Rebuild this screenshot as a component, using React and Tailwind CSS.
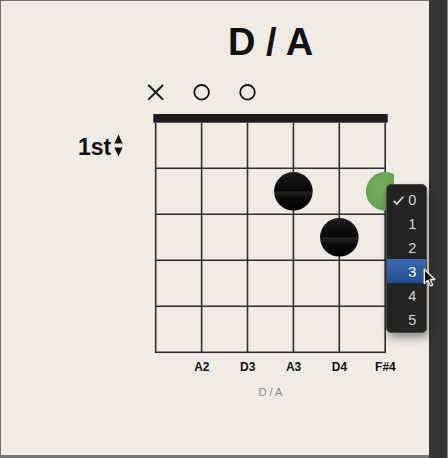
import React from 'react'

const STRING_X = [11.7, 57.6, 103.5, 149.4, 195.3, 241.2]
const FRET_Y = [88.3, 134.3, 180.3, 226.3, 272.3]
const NOTES = ['', 'A2', 'D3', 'A3', 'D4', 'F#4']
const MENU = ['0', '1', '2', '3', '4', '5']

function Fretboard() {
  return (
    <svg width="250" height="275" viewBox="0 0 250 275" className="shrink-0">
      <defs>
        <linearGradient id="ball" x1="0" y1="0" x2="0" y2="1">
          <stop offset="0%" stopColor="#1e1e1e" />
          <stop offset="48%" stopColor="#060606" />
          <stop offset="52%" stopColor="#232323" />
          <stop offset="70%" stopColor="#080808" />
          <stop offset="100%" stopColor="#000" />
        </linearGradient>
        <radialGradient id="green" cx="0.45" cy="0.45" r="0.6">
          <stop offset="0%" stopColor="#76ae5e" />
          <stop offset="100%" stopColor="#65a04c" />
        </radialGradient>
      </defs>

      {/* open / muted markers */}
      <g stroke="#111" strokeWidth="2" fill="none">
        <line x1="4.4" y1="5" x2="19" y2="19.6" />
        <line x1="19" y1="5" x2="4.4" y2="19.6" />
        <circle cx={STRING_X[1]} cy="12.3" r="7.3" strokeWidth="1.8" />
        <circle cx={STRING_X[2]} cy="12.3" r="7.3" strokeWidth="1.8" />
      </g>

      {/* nut */}
      <rect x="9.3" y="34" width="234.4" height="8.7" fill="#1c1c1c" />

      {/* strings + frets */}
      <g stroke="#2e2e2e" strokeWidth="1.6">
        {STRING_X.map((x) => (
          <line key={x} x1={x} y1="42.7" x2={x} y2="273.1" />
        ))}
        {FRET_Y.map((y) => (
          <line key={y} x1={STRING_X[0] - 0.8} y1={y} x2={STRING_X[5] + 0.8} y2={y} />
        ))}
      </g>

      {/* fingers */}
      <circle cx={STRING_X[3]} cy="111.3" r="19.3" fill="url(#ball)" />
      <circle cx={STRING_X[4]} cy="157.3" r="19.3" fill="url(#ball)" />
      <circle cx={STRING_X[5]} cy="111.3" r="19.3" fill="url(#green)" />
    </svg>
  )
}

export default function App() {
  return (
    <div
      className="relative flex h-[458px] w-[448px] bg-[#777777]"
      style={{ fontFamily: '"Liberation Sans", Arial, sans-serif' }}
    >
      <div className="relative flex h-[455px] w-[429px] flex-col border-l border-t border-[#707070] bg-[#efebe5] text-[#111]">
        <h1 className="ml-[151px] mt-[22px] w-[237px] text-center text-[38px] font-bold leading-none">D / A</h1>

        <div className="mt-[19px] flex">
          <div className="flex w-[143px] items-start pl-[77px] pt-[54px]">
            <span className="mt-[1.5px] text-[23px] font-bold leading-none">1st</span>
            <svg width="9" height="23" viewBox="0 0 9 23" className="ml-[3px]">
              <path d="M4.5 0.4 L8.6 9.4 L0.4 9.4 Z" fill="#111" />
              <path d="M0.4 13.4 L8.6 13.4 L4.5 22.6 Z" fill="#111" />
            </svg>
          </div>
          <Fretboard />
        </div>

        <div className="ml-[132px] mt-[6px] flex">
          {NOTES.map((n, i) => (
            <span key={i} className="w-[45.9px] text-center text-[12px] font-bold leading-none">
              {n}
            </span>
          ))}
        </div>

        <div className="ml-[151px] mt-[13.5px] w-[237px] text-center text-[11px] leading-none text-[#8a8a8a]">D / A</div>

        {/* capo / fret popup */}
        <div className="absolute left-[385px] top-[183px] h-[149px] w-[41px] rounded-[5px] border border-[#4a4a4a] bg-[#232323] pb-[2px] pt-[2px] shadow-[2px_5px_9px_rgba(0,0,0,0.4)]">
          {MENU.map((m) => (
            <div
              key={m}
              className={`flex h-[24px] items-center justify-end pr-[9.6px] pt-[3px] text-[14.5px] leading-none ${
                m === '3' ? 'bg-gradient-to-b from-[#3b6bb1] to-[#224d90] text-white' : 'text-[#d6d6d6]'
              }`}
            >
              {m === '0' && (
                <svg width="11" height="9" viewBox="0 0 11 9" className="mr-[4.3px]">
                  <path d="M0.8 4.8 L3.8 8 L10.2 0.8" stroke="#d6d6d6" strokeWidth="1.7" fill="none" />
                </svg>
              )}
              {m}
            </div>
          ))}
        </div>
      </div>
      <div className="h-full w-[18px] bg-[#353535]" />
      <div className="h-full w-px bg-[#8a8a8a]" />

      {/* mouse pointer */}
      <svg width="14" height="20" viewBox="0 0 14 20" className="absolute left-[422.5px] top-[268px]">
        <path
          d="M1.3 1.2 V15.6 L4.9 12.3 L7.5 17.9 L9.7 16.9 L7.2 11.5 L11.8 11.5 Z"
          fill="#000"
          stroke="#fff"
          strokeWidth="1.3"
          strokeLinejoin="round"
        />
      </svg>
    </div>
  )
}
